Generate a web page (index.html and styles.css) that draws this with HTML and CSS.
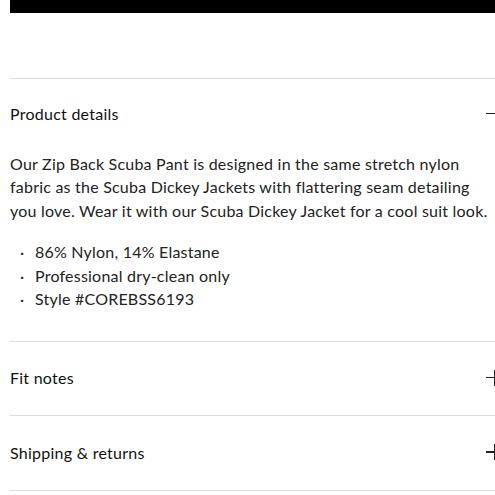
FILE: index.html
```html
<!DOCTYPE html>
<html lang="en">
<head>
<meta charset="utf-8">
<link rel="stylesheet" href="styles.css">
</head>
<body>
<div class="page">
  <div class="cta-bar"></div>
  <div class="spacer"></div>
  <section class="acc open">
    <div class="acc-head">
      <span class="acc-title">Product details</span>
      <span class="icon minus"></span>
    </div>
    <div class="acc-body">
      <p class="desc">Our Zip Back Scuba Pant is designed in the same stretch nylon fabric as the Scuba Dickey Jackets with flattering seam detailing you love. Wear it with our Scuba Dickey Jacket for a cool suit look.</p>
      <ul class="facts">
        <li>86% Nylon, 14% Elastane</li>
        <li>Professional dry-clean only</li>
        <li>Style #COREBSS6193</li>
      </ul>
    </div>
  </section>
  <section class="acc">
    <div class="acc-head">
      <span class="acc-title">Fit notes</span>
      <span class="icon plus"></span>
    </div>
  </section>
  <section class="acc last">
    <div class="acc-head">
      <span class="acc-title">Shipping &amp; returns</span>
      <span class="icon plus"></span>
    </div>
  </section>
  <div class="end-line"></div>
</div>
</body>
</html>
```

FILE: styles.css
```css
html, body {
  margin: 0;
  padding: 0;
  background: #fff;
  overflow: hidden;
}
body {
  width: 495px;
  height: 495px;
  font-family: "Lato", "Liberation Sans", sans-serif;
  color: #1c1c1c;
}
.page {
  width: 491px;
  padding-left: 10px;
}
.cta-bar {
  height: 13px;
  background: #000;
}
.spacer {
  height: 65px;
}
.acc {
  border-top: 1px solid #dcdcdc;
}
.end-line {
  border-top: 1px solid #dcdcdc;
}
.acc-head {
  height: 73px;
  display: flex;
  align-items: center;
  justify-content: space-between;
}
.last .acc-head {
  height: 74px;
}
.acc-title {
  font-size: 16px;
  letter-spacing: 0.25px;
  color: #111;
  margin-top: -2px;
}
.open .acc-title,
.open .icon {
  margin-top: -4px;
}
.icon {
  width: 16px;
  height: 16px;
  position: relative;
  margin-right: -1px;
  margin-top: -2px;
}
.icon::before {
  content: "";
  position: absolute;
  left: 0;
  right: 0;
  top: 7px;
  height: 1.5px;
  background: #222;
}
.plus::after {
  content: "";
  position: absolute;
  top: 0;
  bottom: 0;
  left: 7.5px;
  width: 1.5px;
  background: #222;
}
.acc-body {
  padding-bottom: 31px;
}
.desc {
  max-width: 480px;
  margin: 0 0 18px;
  font-size: 16px;
  line-height: 23.4px;
  letter-spacing: 0.22px;
  color: #222;
}
.facts {
  list-style: none;
  margin: 0;
  padding: 0;
  font-size: 16px;
  line-height: 23.4px;
  letter-spacing: 0.22px;
  color: #222;
}
.facts li {
  display: flex;
}
.facts li::before {
  content: "·";
  width: 25px;
  padding-left: 10px;
  box-sizing: border-box;
}
```
